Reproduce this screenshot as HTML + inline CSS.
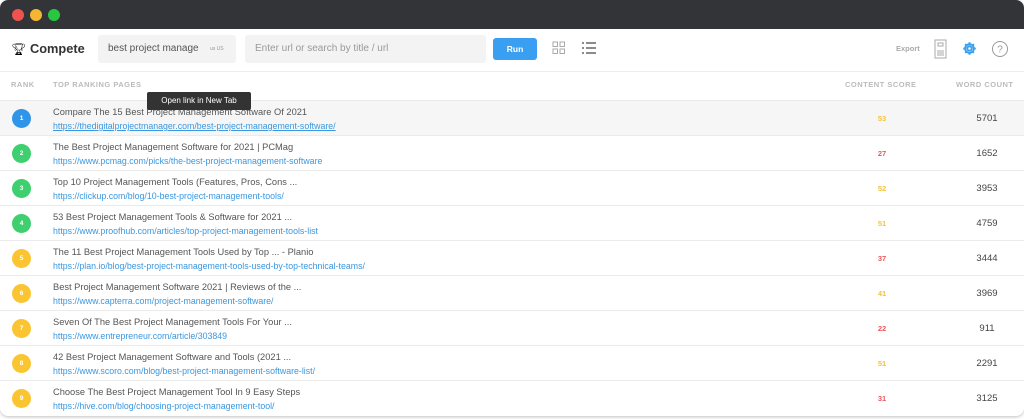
<!DOCTYPE html>
<html><head><meta charset="utf-8"><style>
*{margin:0;padding:0;box-sizing:border-box}
body{width:1024px;height:419px;background:#fff;font-family:"Liberation Sans",sans-serif;position:relative;overflow:hidden}
.win{position:absolute;left:0;top:0;width:1024px;height:416px;border-radius:8px;overflow:hidden;background:#fff;box-shadow:0 1px 3px rgba(0,0,0,.25)}
.tb{height:29px;background:#333437;position:relative}
.dot{position:absolute;top:9px;width:12px;height:12px;border-radius:50%}
.bar{position:absolute;top:29px;left:0;right:0;height:43px;border-bottom:1px solid #eee}
.abs{position:absolute}
.hdr{position:absolute;top:80px;font-size:7.5px;font-weight:bold;color:#bbb;letter-spacing:.5px}
.row{position:absolute;left:0;right:0;height:35px;border-bottom:1px solid #ebebeb}
.c{position:absolute;left:12px;top:8px;width:19px;height:19px;border-radius:50%;color:#fff;font-size:6.5px;font-weight:bold;text-align:center;line-height:19px}
.t{position:absolute;left:53px;top:6px;font-size:9.3px;color:#555}
.u{position:absolute;left:53px;top:20px;font-size:8.8px;color:#3a97e0}
.s{position:absolute;left:870px;width:24px;text-align:center;top:13px;font-size:7.5px;font-weight:bold}
.w{position:absolute;left:960px;width:54px;text-align:center;top:12px;font-size:9.5px;color:#444}
</style></head><body>
<div class="win">
<div class="tb">
<div class="dot" style="left:12px;background:#ee5350"></div>
<div class="dot" style="left:30px;background:#f5b731"></div>
<div class="dot" style="left:48px;background:#27c840"></div>
</div>
<div class="bar">
<div class="abs" style="left:11px;top:13px;font-size:12px">🏆︎</div>
<div class="abs" style="left:30px;top:12px;font-size:12.8px;font-weight:bold;color:#333">Compete</div>
<div class="abs" style="left:98px;top:6px;width:138px;height:28px;background:#f3f3f3;border-radius:3px"><span class="abs" style="left:10px;top:8px;font-size:10px;color:#555">best project manage</span><span class="abs" style="left:112px;top:11px;font-size:5px;color:#999">us US</span></div>
<div class="abs" style="left:245px;top:6px;width:241px;height:28px;background:#f3f3f3;border-radius:3px"><span class="abs" style="left:10px;top:8px;font-size:10px;color:#999">Enter url or search by title / url</span></div>
<div class="abs" style="left:493px;top:9px;width:44px;height:22px;background:#3a9ff0;border-radius:3px;color:#fff;font-size:8.5px;font-weight:bold;text-align:center;line-height:22px">Run</div>
<svg class="abs" style="left:552px;top:12px" width="14" height="14" viewBox="0 0 14 14" fill="none" stroke="#aaa" stroke-width="1"><rect x="1" y="1" width="4.5" height="4.5"/><rect x="8" y="1" width="4.5" height="4.5"/><rect x="1" y="8" width="4.5" height="4.5"/><rect x="8" y="8" width="4.5" height="4.5"/></svg>
<svg class="abs" style="left:581px;top:12px" width="16" height="14" viewBox="0 0 16 14" stroke="#666" stroke-width="1.6"><path d="M1 2h2M5 2h10M1 7h2M5 7h10M1 12h2M5 12h10"/></svg>
<div class="abs" style="left:896px;top:15px;font-size:7.5px;font-weight:bold;color:#aaa">Export</div>
<svg class="abs" style="left:934px;top:10px" width="13" height="20" viewBox="0 0 13 20" fill="none" stroke="#aaa"><rect x="1" y="1" width="11" height="18"/><rect x="4" y="4" width="5" height="3"/><path d="M3 12h7M3 14h7M3 16h7"/></svg>
<svg class="abs" style="left:962px;top:12px" width="15" height="15" viewBox="0 0 24 24" fill="none" stroke="#3a9ff0" stroke-width="3"><circle cx="12" cy="12" r="3.5"/><path d="M12 2v3M12 19v3M2 12h3M19 12h3M5 5l2 2M17 17l2 2M5 19l2-2M17 7l2-2"/><circle cx="12" cy="12" r="7"/></svg>
<svg class="abs" style="left:991px;top:11px" width="18" height="18" viewBox="0 0 18 18" fill="none" stroke="#999"><circle cx="9" cy="9" r="7.5"/><text x="9" y="12.5" font-size="10" text-anchor="middle" fill="#999" stroke="none" font-family="Liberation Sans">?</text></svg>
</div>
<div class="hdr" style="left:11px">RANK</div>
<div class="hdr" style="left:53px">TOP RANKING PAGES</div>
<div class="hdr" style="left:845px">CONTENT SCORE</div>
<div class="hdr" style="left:956px">WORD COUNT</div>
<div style="position:absolute;left:0;right:0;top:100px;border-top:1px solid #ebebeb"></div>

<div class="row" style="top:101px;background:#f6f6f6"><div class="c" style="background:#2f95e8">1</div><div class="t">Compare The 15 Best Project Management Software Of 2021</div><div class="u" style="text-decoration:underline">https://thedigitalprojectmanager.com/best-project-management-software/</div><div class="s" style="color:#f5c23c">53</div><div class="w">5701</div></div>
<div class="row" style="top:136px"><div class="c" style="background:#3ecf6e">2</div><div class="t">The Best Project Management Software for 2021 | PCMag</div><div class="u">https://www.pcmag.com/picks/the-best-project-management-software</div><div class="s" style="color:#e8595c">27</div><div class="w">1652</div></div>
<div class="row" style="top:171px"><div class="c" style="background:#3ecf6e">3</div><div class="t">Top 10 Project Management Tools (Features, Pros, Cons ...</div><div class="u">https://clickup.com/blog/10-best-project-management-tools/</div><div class="s" style="color:#f5c23c">52</div><div class="w">3953</div></div>
<div class="row" style="top:206px"><div class="c" style="background:#3ecf6e">4</div><div class="t">53 Best Project Management Tools &amp; Software for 2021 ...</div><div class="u">https://www.proofhub.com/articles/top-project-management-tools-list</div><div class="s" style="color:#f5c23c">51</div><div class="w">4759</div></div>
<div class="row" style="top:241px"><div class="c" style="background:#fbc531">5</div><div class="t">The 11 Best Project Management Tools Used by Top ... - Planio</div><div class="u">https://plan.io/blog/best-project-management-tools-used-by-top-technical-teams/</div><div class="s" style="color:#e8595c">37</div><div class="w">3444</div></div>
<div class="row" style="top:276px"><div class="c" style="background:#fbc531">6</div><div class="t">Best Project Management Software 2021 | Reviews of the ...</div><div class="u">https://www.capterra.com/project-management-software/</div><div class="s" style="color:#f5c23c">41</div><div class="w">3969</div></div>
<div class="row" style="top:311px"><div class="c" style="background:#fbc531">7</div><div class="t">Seven Of The Best Project Management Tools For Your ...</div><div class="u">https://www.entrepreneur.com/article/303849</div><div class="s" style="color:#e8595c">22</div><div class="w">911</div></div>
<div class="row" style="top:346px"><div class="c" style="background:#fbc531">8</div><div class="t">42 Best Project Management Software and Tools (2021 ...</div><div class="u">https://www.scoro.com/blog/best-project-management-software-list/</div><div class="s" style="color:#f5c23c">51</div><div class="w">2291</div></div>
<div class="row" style="top:381px;border-bottom:none"><div class="c" style="background:#fbc531">9</div><div class="t">Choose The Best Project Management Tool In 9 Easy Steps</div><div class="u">https://hive.com/blog/choosing-project-management-tool/</div><div class="s" style="color:#e8595c">31</div><div class="w">3125</div></div>

<div class="abs" style="left:147px;top:92px;width:104px;height:18px;background:#333;border-radius:2px;color:#fff;font-size:8px;text-align:center;line-height:18px">Open link in New Tab</div>
</div>
</body></html>
